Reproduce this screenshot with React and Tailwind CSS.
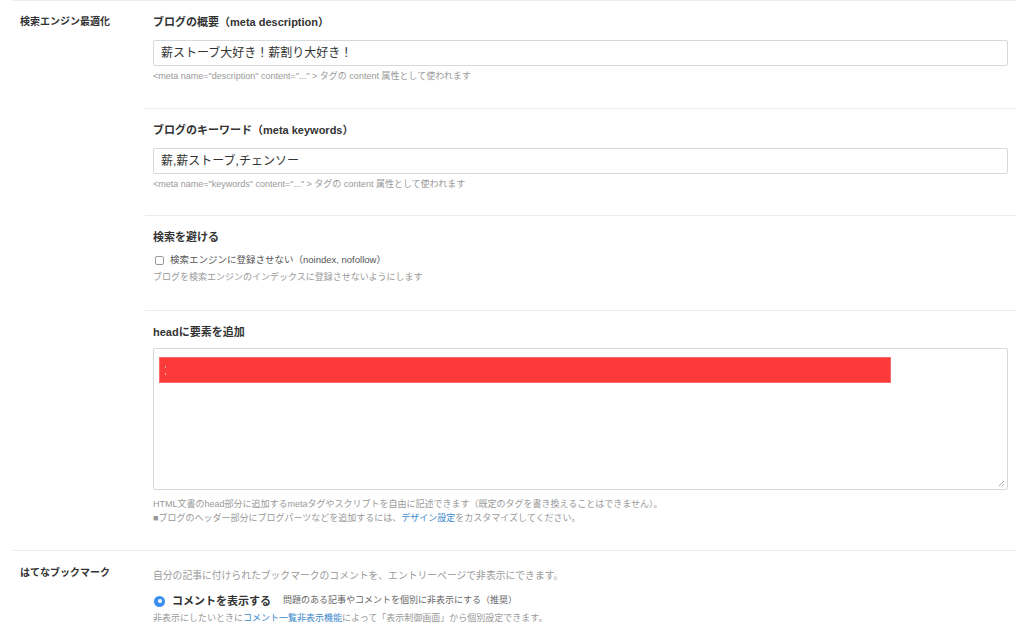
function Title({ children }) {
  return <div className="h-4 text-[11px] font-bold leading-4 text-[#333]">{children}</div>
}

function Help({ children, className = '' }) {
  return <div className={`text-[9px] leading-[14px] text-[#999] ${className}`}>{children}</div>
}

function TextInput({ value }) {
  return (
    <div className="mt-[10px] flex h-[26px] items-center rounded-[2px] border border-[#d5dadd] bg-white pl-[7px] text-[12px] text-[#333]">
      {value}
    </div>
  )
}

export default function App() {
  return (
    <div className="min-h-[634px] bg-white font-['Liberation_Sans','Noto_Sans_CJK_JP',sans-serif]">
      <div className="mx-[12px] w-[1004px] border-t border-[#eeeeee]">
        {/* 検索エンジン最適化 */}
        <div className="flex border-b border-[#e8ecee]">
          <div className="w-[133px] shrink-0 pl-2 pt-[13px] text-[10px] font-bold leading-4 text-[#333]">
            検索エンジン最適化
          </div>
          <div className="min-w-0 flex-1">
            <div className="border-b border-[#e8ecee] px-2 pb-[25px] pt-[13px]">
              <Title>ブログの概要（meta description）</Title>
              <TextInput value="薪ストーブ大好き！薪割り大好き！" />
              <Help className="mt-[3px]">
                &lt;meta name="description" content="..." &gt; タグの content 属性として使われます
              </Help>
            </div>

            <div className="border-b border-[#e8ecee] px-2 pb-[24px] pt-[13px]">
              <Title>ブログのキーワード（meta keywords）</Title>
              <TextInput value="薪,薪ストーブ,チェンソー" />
              <Help className="mt-[3px]">
                &lt;meta name="keywords" content="..." &gt; タグの content 属性として使われます
              </Help>
            </div>

            <div className="border-b border-[#e8ecee] px-2 pb-[26px] pt-[13px]">
              <Title>検索を避ける</Title>
              <div className="mt-2 flex h-[14px] items-center gap-[6px] pl-[2px] text-[9.5px] text-[#555]">
                <span className="h-[9px] w-[9px] rounded-[2px] border border-[#9a9a9a] bg-white" />
                <span>検索エンジンに登録させない（noindex, nofollow）</span>
              </div>
              <Help className="mt-[3px]">ブログを検索エンジンのインデックスに登録させないようにします</Help>
            </div>

            <div className="px-2 pb-[25px] pt-[13px]">
              <Title>headに要素を追加</Title>
              <div className="relative mt-2 h-[142px] rounded-[2px] border border-[#d5dadd] bg-white pl-[5px] pt-2">
                <div className="flex h-[26px] w-[732px] flex-col justify-center gap-[5px] border border-[#fb6b6b] bg-[#fc3a3a] pl-[5px]">
                  <span className="h-[2px] w-[1px] bg-[#d8a0b0]" />
                  <span className="h-[2px] w-[1px] bg-[#f0b0a0]" />
                </div>
                <svg className="absolute bottom-[2px] right-[2px]" width="7" height="7" viewBox="0 0 7 7">
                  <path d="M6 1L1 6M6 4L4 6" stroke="#999" strokeWidth="0.8" fill="none" />
                </svg>
              </div>
              <Help className="mt-[7px]">
                HTML文書のhead部分に追加するmetaタグやスクリプトを自由に記述できます（既定のタグを書き換えることはできません）。
              </Help>
              <Help>
                ■ブログのヘッダー部分にブログパーツなどを追加するには、
                <span className="text-[#3b87cc]">デザイン設定</span>
                をカスタマイズしてください。
              </Help>
            </div>
          </div>
        </div>

        {/* はてなブックマーク */}
        <div className="flex">
          <div className="w-[133px] shrink-0 pl-2 pt-[14px] text-[10px] font-bold leading-4 text-[#333]">
            はてなブックマーク
          </div>
          <div className="min-w-0 flex-1 px-2 pt-[18px]">
            <div className="text-[9.8px] leading-[14px] text-[#999]">
              自分の記事に付けられたブックマークのコメントを、エントリーページで非表示にできます。
            </div>
            <div className="mt-[9px] flex h-[18px] items-center">
              <span className="ml-[1px] flex h-[11px] w-[11px] items-center justify-center rounded-full bg-[#3a8ef0]">
                <span className="h-[4px] w-[4px] rounded-full bg-white" />
              </span>
              <span className="ml-[7px] text-[11px] font-bold text-[#333]">コメントを表示する</span>
              <span className="ml-[12px] text-[9px] text-[#666]">問題のある記事やコメントを個別に非表示にする（推奨）</span>
            </div>
            <Help className="mt-px">
              非表示にしたいときに<span className="text-[#3b87cc]">コメント一覧非表示機能</span>によって「表示制御画面」から個別設定できます。
            </Help>
          </div>
        </div>
      </div>
    </div>
  )
}
